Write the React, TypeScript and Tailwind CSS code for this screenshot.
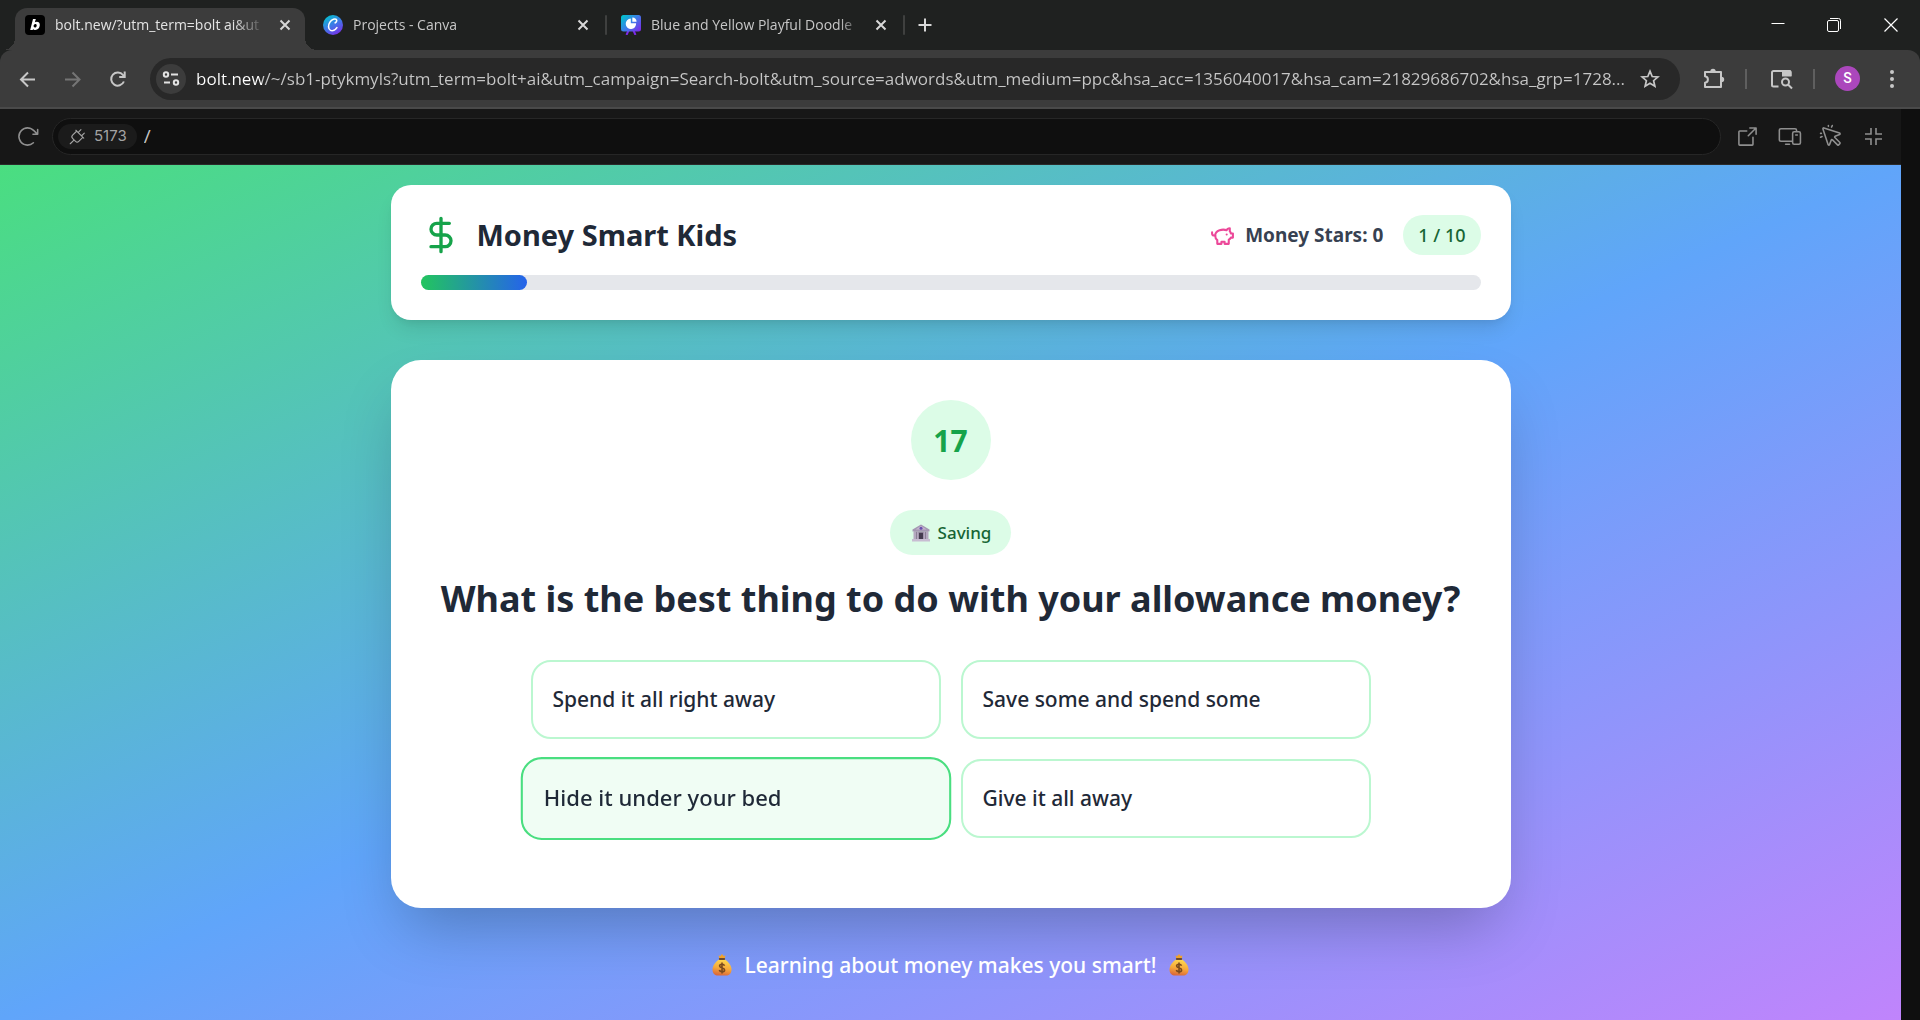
import type { ReactNode } from "react";
import { PiArrowClockwise, PiArrowSquareOut, PiCursorClick, PiDevices, PiPlug } from "react-icons/pi";

function BoltFavicon() {
  return (
    <svg viewBox="0 0 20 20" className="size-5 shrink-0" aria-hidden="true">
      <rect width="20" height="20" rx="4" fill="#000" />
      <path
        fillRule="evenodd"
        d="M8 4h2.800l-.9 3.300c.6-.4 1.200-.6 1.900-.6 1.900 0 3 1.200 3 3.100 0 2.900-1.900 5.200-4.500 5.200-1 0-1.800-.4-2.200-1l-.4.900H5.200L8 4Zm2.300 4.900c-1 0-1.700 1-1.700 2.200 0 .9.500 1.400 1.300 1.400 1.100 0 1.800-.9 1.800-2.100 0-1-.5-1.500-1.400-1.500Z"
        fill="#fff"
      />
    </svg>
  );
}

function CanvaFavicon() {
  return (
    <svg viewBox="0 0 20 20" className="size-5 shrink-0" aria-hidden="true">
      <defs>
        <linearGradient id="canva" x1="0.2" y1="0" x2="0.8" y2="1">
          <stop offset="0" stopColor="#00c4cc" />
          <stop offset="0.5" stopColor="#3f78e8" />
          <stop offset="1" stopColor="#7d2ae8" />
        </linearGradient>
      </defs>
      <circle cx="10" cy="10" r="10" fill="url(#canva)" />
      <path
        d="M12.200 7.800c1.200-.6 2-2.300 1.200-3.200-1.100-1.300-4.600-.4-6.500 2.500-2.100 3.200-1.700 7.200.6 8.300 2.100 1 4.900-.3 6.400-2.700"
        fill="none"
        stroke="#fff"
        strokeWidth="1.600"
        strokeLinecap="round"
      />
    </svg>
  );
}

function PresentationFavicon() {
  return (
    <svg viewBox="0 0 20 20" className="size-5 shrink-0" aria-hidden="true">
      <defs>
        <linearGradient id="deck" x1="0" y1="0.100" x2="1" y2="0.900">
          <stop offset="0" stopColor="#00c4cc" />
          <stop offset="0.500" stopColor="#3c7ee8" />
          <stop offset="1" stopColor="#7d2ae8" />
        </linearGradient>
      </defs>
      <path d="M7.500 15.500 5.500 20M12.500 15.500 14.500 20" stroke="#7d2ae8" strokeWidth="2" />
      <rect width="20" height="16.500" rx="2.500" fill="url(#deck)" />
      <path d="M9.800 3.600V8.300h5.300a5.200 5.200 0 1 1-5.300-4.700Z" fill="#fff" />
      <path d="M11.300 2.500a4.500 4.500 0 0 1 4.300 4.300h-4.300V2.500Z" fill="#fff" />
    </svg>
  );
}

function CloseGlyph() {
  return (
    <svg viewBox="0 0 20 20" className="size-5" fill="none" stroke="currentColor" strokeWidth="2" aria-hidden="true">
      <path d="m5.500 5.500 9 9M14.500 5.500l-9 9" />
    </svg>
  );
}

type TabProps = { icon: ReactNode; title: string; active?: boolean; divider?: boolean };

function Tab({ icon, title, active, divider }: TabProps) {
  return (
    <div className="flex h-[42px] w-[298px] shrink-0 items-center">
      <div
        className={
          active
            ? "relative flex h-full w-[290px] items-start rounded-t-xl bg-[#3c3c3c] pt-[7px] pr-2.5 pl-2.5"
            : "flex h-full w-[290px] items-start pt-[7px] pr-2.5 pl-2.5"
        }
      >
        {active && (
          <>
            <span className="absolute bottom-0 -left-3 size-3 bg-[radial-gradient(circle_at_0_0,transparent_12px,#3c3c3c_12px)]" />
            <span className="absolute -right-3 bottom-0 size-3 bg-[radial-gradient(circle_at_100%_0,transparent_12px,#3c3c3c_12px)]" />
          </>
        )}
        <button type="button" className="flex min-w-0 flex-1 items-center gap-2.5 text-left">
          {icon}
          <span
            className={
              active
                ? "min-w-0 flex-1 overflow-hidden mask-r-from-85% text-[14px] leading-5 whitespace-nowrap text-[#e3e3e3]"
                : "min-w-0 flex-1 overflow-hidden mask-r-from-90% text-[14px] leading-5 whitespace-nowrap text-[#c7c7c7]"
            }
          >
            {title}
          </span>
        </button>
        <button type="button" aria-label="Close tab" className="ml-2.5 text-[#d8d8d8]">
          <CloseGlyph />
        </button>
      </div>
      <span className={divider ? "mb-2 ml-0.5 h-5 w-0.5 rounded-full bg-[#3f403f]" : "hidden"} />
    </div>
  );
}

function TabStrip() {
  return (
    <div className="flex h-[50px] items-end bg-[#1f2120] pl-[15px] font-['Open_Sans',sans-serif]">
      <Tab active icon={<BoltFavicon />} title="bolt.new/?utm_term=bolt ai&ut" />
      <Tab divider icon={<CanvaFavicon />} title="Projects - Canva" />
      <Tab divider icon={<PresentationFavicon />} title="Blue and Yellow Playful Doodle" />
      <button type="button" aria-label="New tab" className="mb-3.5 ml-[5px] text-[#d8d8d8]">
        <svg viewBox="0 0 22 22" className="size-[22px]" fill="none" stroke="currentColor" strokeWidth="2" aria-hidden="true">
          <path d="M11 4.500v13M4.500 11h13" />
        </svg>
      </button>
      <div className="ml-auto flex h-full items-center text-white">
        <button type="button" aria-label="Minimize" className="flex h-full w-14 items-center justify-center">
          <svg viewBox="0 0 14 14" className="size-3.5" aria-hidden="true">
            <path d="M0.500 5.500h13" stroke="currentColor" />
          </svg>
        </button>
        <button type="button" aria-label="Restore" className="flex h-full w-14 items-center justify-center">
          <svg viewBox="0 0 14 14" className="size-3.5" fill="none" stroke="currentColor" aria-hidden="true">
            <rect x="0.500" y="2.500" width="11" height="11" rx="1.500" />
            <path d="M3 .5h8.500a2 2 0 0 1 2 2V11" />
          </svg>
        </button>
        <button type="button" aria-label="Close window" className="flex h-full w-[58px] items-center justify-center">
          <svg viewBox="0 0 14 14" className="size-3.5" stroke="currentColor" strokeWidth="1.200" aria-hidden="true">
            <path d="m.5.5 13 13M13.500.5l-13 13" />
          </svg>
        </button>
      </div>
    </div>
  );
}

function AddressRow() {
  return (
    <div className="bg-[#1f2120] font-['Open_Sans',sans-serif]">
      <div className="flex h-[59px] items-center rounded-t-xl border-b-2 border-[#4a4a4a] bg-[#3c3c3c] pr-4 pl-[18px] text-[#c7c7c7]">
        <button type="button" aria-label="Back">
          <svg viewBox="0 0 20 20" className="size-5" fill="none" stroke="currentColor" strokeWidth="2" aria-hidden="true">
            <path d="M17 10.500H3.500M10 3.500l-7 7 7 7" />
          </svg>
        </button>
        <button type="button" aria-label="Forward" className="ml-[25px] text-[#757575]">
          <svg viewBox="0 0 20 20" className="size-5" fill="none" stroke="currentColor" strokeWidth="2" aria-hidden="true">
            <path d="M2 10.500h14M9.500 3.500l7 7-7 7" />
          </svg>
        </button>
        <button type="button" aria-label="Reload" className="ml-[25px]">
          <svg viewBox="0 0 20 20" className="size-5" fill="none" stroke="currentColor" strokeWidth="2" aria-hidden="true">
            <path d="M15.900 12.500A6.600 6.600 0 1 1 15 6l1.700 1.800" />
            <path d="M16.700 2.500V8h-5.500" />
          </svg>
        </button>
        <div className="ml-[22px] flex h-[42px] min-w-0 flex-1 items-center rounded-full bg-[#282828] pr-5 pl-1.5">
          <button
            type="button"
            aria-label="Site information"
            className="flex size-[30px] shrink-0 items-center justify-center rounded-full bg-[#3c3c3c]"
          >
            <svg viewBox="0 0 18 18" className="size-[18px]" fill="none" stroke="#e3e3e3" strokeWidth="2" aria-hidden="true">
              <circle cx="4" cy="4.500" r="2.200" />
              <path d="M9 4.500h7M2 12.500h6" />
              <circle cx="14" cy="12.500" r="2.200" />
            </svg>
          </button>
          <input
            type="text"
            aria-label="Address"
            defaultValue="bolt.new/~/sb1-ptykmyls?utm_term=bolt+ai&utm_campaign=Search-bolt&utm_source=adwords&utm_medium=ppc&hsa_acc=1356040017&hsa_cam=21829686702&hsa_grp=1728..."
            className="ml-2.5 h-8 min-w-0 flex-1 bg-[linear-gradient(90deg,#ffffff_66px,#c7c7c7_66px)] bg-clip-text text-[17px] text-transparent outline-none"
          />
          <button type="button" aria-label="Bookmark this tab" className="ml-4">
            <svg viewBox="0 0 20 20" className="size-5" fill="none" stroke="currentColor" strokeWidth="1.700" aria-hidden="true">
              <path d="m10 2.200 2.200 5.300 5.700.5-4.300 3.700 1.300 5.600-4.900-3-4.900 3 1.300-5.600L2.100 8l5.700-.5L10 2.200Z" />
            </svg>
          </button>
        </div>
        <button type="button" aria-label="Extensions" className="ml-[21px]">
          <svg viewBox="0 0 24 24" className="size-6" aria-hidden="true">
            <path
              d="M4 5h16v15H4v-4.300c1.800-.2 2.900-1.500 2.900-3.200S5.800 9.500 4 9.300V5Z"
              fill="none"
              stroke="currentColor"
              strokeWidth="2"
              strokeLinejoin="round"
            />
            <path d="M9.300 4.500a2.700 2.700 0 0 1 5.400 0ZM20.500 9.800a2.700 2.700 0 0 1 0 5.400Z" fill="currentColor" />
          </svg>
        </button>
        <span className="ml-5 h-5 w-0.5 bg-[#5f5f5f]" />
        <button type="button" aria-label="Search side panel" className="ml-[22px]">
          <svg viewBox="0 0 24 24" className="size-6" fill="none" stroke="currentColor" strokeWidth="2" aria-hidden="true">
            <path d="M9.500 19.500H4.500a1.500 1.500 0 0 1-1.500-1.500V5.500A1.500 1.500 0 0 1 4.500 4H20a1.500 1.500 0 0 1 1.500 1.500V9" />
            <path d="M13 3h7.500a2 2 0 0 1 2 2v4.500H13Z" fill="currentColor" stroke="none" />
            <circle cx="16.500" cy="15" r="3.500" />
            <path d="m19 17.500 4 4" />
          </svg>
        </button>
        <span className="ml-5 h-5 w-0.5 bg-[#5f5f5f]" />
        <button
          type="button"
          aria-label="Profile"
          className="ml-5 flex size-[25px] items-center justify-center rounded-full bg-[#ab47bc] font-[Roboto] text-[14px] font-medium text-white"
        >
          S
        </button>
        <button type="button" aria-label="Browser menu" className="ml-5">
          <svg viewBox="0 0 24 24" className="size-6" fill="currentColor" aria-hidden="true">
            <circle cx="12" cy="5" r="2" />
            <circle cx="12" cy="12" r="2" />
            <circle cx="12" cy="19" r="2" />
          </svg>
        </button>
      </div>
    </div>
  );
}

function PreviewBar() {
  return (
    <div className="flex h-14 items-center border-b border-[#2a2a2a] bg-[#171717] px-[15px] font-['Open_Sans',sans-serif] text-[#8f8f8f]">
      <button type="button" aria-label="Reload preview">
        <PiArrowClockwise className="size-[25px]" />
      </button>
      <div className="ml-3 flex h-[37px] min-w-0 flex-1 items-center rounded-full border border-[#262626] bg-[#0f0f0f] pl-[5px]">
        <button type="button" className="flex h-[25px] items-center gap-2 rounded-full bg-[#1b1b1b] px-2.5 text-[15px] text-[#a3a3a3]">
          <PiPlug className="size-[18px]" />
          <span className="font-[Inter]">5173</span>
        </button>
        <input
          type="text"
          aria-label="Preview path"
          defaultValue="/"
          className="ml-[7px] h-7 min-w-0 flex-1 bg-transparent text-[19px] text-[#c4c4c4] outline-none"
        />
      </div>
      <div className="ml-3.5 flex items-center gap-[17px]">
        <button type="button" aria-label="Open in new tab">
          <PiArrowSquareOut className="size-[25px]" />
        </button>
        <button type="button" aria-label="Device preview">
          <PiDevices className="size-[25px]" />
        </button>
        <button type="button" aria-label="Inspect element">
          <PiCursorClick className="size-[25px]" />
        </button>
        <button type="button" aria-label="Exit full screen">
          <svg viewBox="0 0 25 25" className="size-[25px]" fill="none" stroke="currentColor" strokeWidth="1.600" aria-hidden="true">
            <path d="M10 4v6H4M15 4v6h6M10 21v-6H4M15 21v-6h6" />
          </svg>
        </button>
      </div>
    </div>
  );
}

function DollarIcon() {
  return (
    <svg
      viewBox="0 0 24 24"
      className="size-10"
      fill="none"
      stroke="#16a34a"
      strokeWidth="2"
      strokeLinecap="round"
      strokeLinejoin="round"
      aria-hidden="true"
    >
      <path d="M12 2v20M17 5H9.500a3.500 3.500 0 0 0 0 7h5a3.500 3.500 0 0 1 0 7H6" />
    </svg>
  );
}

function PiggyIcon() {
  return (
    <svg
      viewBox="0 0 24 24"
      className="size-[25px]"
      fill="none"
      stroke="#ec4899"
      strokeWidth="2"
      strokeLinecap="round"
      strokeLinejoin="round"
      aria-hidden="true"
    >
      <path d="M19 5c-1.500 0-2.800 1.400-3 2-3.500-1.500-11-.3-11 5 0 1.800 0 3 2 4.500V20h4v-2h3v2h4v-4c1-.5 1.700-1 2-2h2v-4h-2c0-1-.5-1.500-1-2V5z" />
      <path d="M2 9v1c0 1.100.9 2 2 2h1" />
      <path d="M16 11h.01" />
    </svg>
  );
}

function BankIcon() {
  return (
    <svg viewBox="-1 -1 22 22" className="size-[22px]" role="img" aria-label="Bank">
      <path d="M10 1.500 1.500 6.500V8.500h17V6.500L10 1.500Z" fill="#a597b3" />
      <path d="M10 2.800 4.500 6.500h11L10 2.800Z" fill="#c3b7cd" />
      <path d="M3 8.500h14V16H3Z" fill="#8c8096" />
      <path d="M2.500 8.500h2.500V16H2.500ZM6 8.500h1.500V16H6ZM12.500 8.500H14V16h-1.500ZM15 8.500h2.500V16H15Z" fill="#b5a8c0" />
      <path d="M8 10h4v6H8Z" fill="#453b4f" />
      <path d="M1 16h18v2.500H1Z" fill="#c8bdd2" />
      <circle cx="10" cy="5.200" r="1.500" fill="#6b4fb0" />
    </svg>
  );
}

function MoneyBag() {
  return (
    <svg viewBox="0 0 22 24" className="h-6 w-[22px]" role="img" aria-label="Money bag">
      <defs>
        <linearGradient id="bag" x1="0.600" y1="0" x2="0.400" y2="1">
          <stop offset="0" stopColor="#ffd84f" />
          <stop offset="0.550" stopColor="#f6a93b" />
          <stop offset="1" stopColor="#d9663a" />
        </linearGradient>
      </defs>
      <path d="M7.500 1.500 9.300 2 11 0l1.700 2 1.800-.5-1 3.500h-5l-1-3.500Z" fill="#f0a22f" />
      <path
        d="M8 5.500h6c2.500 1.500 6.500 5.500 6.500 10 0 4-2.500 6-5.500 6H7c-3 0-5.500-2-5.500-6 0-4.500 4-8.500 6.500-10Z"
        fill="url(#bag)"
      />
      <rect x="7.800" y="4" width="6.400" height="2" rx="1" fill="#6b4a2f" />
      <path
        d="M11 8.500v11M13.500 11.800c-.3-1-1.300-1.500-2.500-1.500-1.400 0-2.400.7-2.400 1.800 0 2.500 5 1.200 5 3.800 0 1.100-1.100 1.800-2.600 1.800-1.300 0-2.400-.6-2.700-1.700"
        fill="none"
        stroke="#7a4a1e"
        strokeWidth="1.600"
      />
    </svg>
  );
}

function ScoreHeader() {
  return (
    <header className="rounded-[20px] bg-white p-[30px] shadow-[0_12px_19px_-4px_rgba(0,0,0,0.1),0_5px_8px_-5px_rgba(0,0,0,0.1)]">
      <div className="flex items-center justify-between">
        <div className="flex items-center gap-4">
          <DollarIcon />
          <h1 className="text-[29px] leading-10 font-bold text-[#1f2937]">Money Smart Kids</h1>
        </div>
        <div className="flex items-center gap-5">
          <div className="flex items-center gap-2.5">
            <PiggyIcon />
            <span className="text-[19px] font-bold text-[#374151]">Money Stars: 0</span>
          </div>
          <span className="flex h-10 items-center rounded-full bg-[#dcfce7] px-[15px] text-[18px] font-medium text-[#166534]">
            1 / 10
          </span>
        </div>
      </div>
      <div
        role="progressbar"
        aria-label="Quiz progress"
        aria-valuenow={1}
        aria-valuemin={0}
        aria-valuemax={10}
        className="mt-5 h-[15px] rounded-full bg-[#e5e7eb]"
      >
        <div className="h-full w-1/10 rounded-full bg-linear-to-r/srgb from-[#22c55e] to-[#2563eb]" />
      </div>
    </header>
  );
}

const OPTIONS = ["Spend it all right away", "Save some and spend some", "Hide it under your bed", "Give it all away"];
const HOVERED = 2;

function QuestionCard() {
  return (
    <section className="mt-10 flex flex-col items-center rounded-[30px] bg-white px-10 pt-10 pb-[70px] shadow-[0_31px_62px_-15px_rgba(0,0,0,0.25)]">
      <div className="flex size-20 items-center justify-center rounded-full bg-[#dcfce7] text-[30px] font-bold text-[#16a34a]">
        17
      </div>
      <div className="mt-[30px] flex h-[45px] items-center gap-1.5 rounded-full bg-[#dcfce7] px-5 text-[17px] font-medium text-[#166534]">
        <BankIcon />
        Saving
      </div>
      <h2 className="mt-5 text-center text-[36px] leading-12 font-bold whitespace-nowrap text-[#1f2937]">
        What is the best thing to do with your allowance money?
      </h2>
      <div className="mt-[37px] grid w-full max-w-[840px] grid-cols-2 gap-5">
        {OPTIONS.map((option, i) => (
          <button
            key={option}
            type="button"
            className={
              i === HOVERED
                ? "scale-105 rounded-[20px] border-2 border-[#4ade80] bg-[#f0fdf4] p-5 text-left text-[21px] leading-[35px] font-medium text-[#1f2937]"
                : "rounded-[20px] border-2 border-[#bbf7d0] bg-white p-5 text-left text-[21px] leading-[35px] font-medium text-[#1f2937]"
            }
          >
            {option}
          </button>
        ))}
      </div>
    </section>
  );
}

export default function App() {
  return (
    <div className="flex min-h-screen flex-col bg-[#0f0f0f] font-['Noto_Sans','Open_Sans',sans-serif]">
      <TabStrip />
      <AddressRow />
      <div className="mr-[19px] flex flex-1 flex-col">
        <PreviewBar />
        <main className="flex-1 bg-linear-to-br/srgb from-[#4ade80] via-[#60a5fa] to-[#c084fc] p-5">
          <div className="mx-auto max-w-[1120px]">
            <ScoreHeader />
            <QuestionCard />
            <footer className="mt-10 flex items-center justify-center gap-3 text-[21px] leading-[35px] font-medium text-white">
              <MoneyBag />
              <p>Learning about money makes you smart!</p>
              <MoneyBag />
            </footer>
          </div>
        </main>
      </div>
    </div>
  );
}
